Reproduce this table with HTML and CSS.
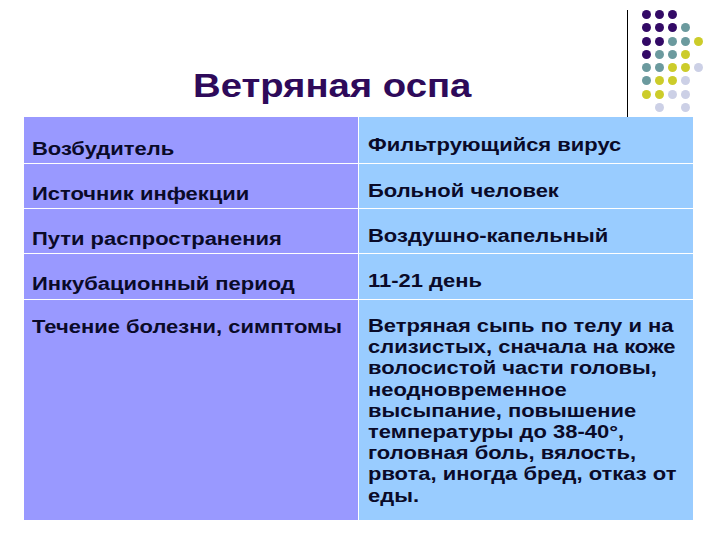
FILE: index.html
```html
<!DOCTYPE html>
<html lang="ru">
<head>
<meta charset="utf-8">
<title>Ветряная оспа</title>
<link rel="stylesheet" href="styles.css">
</head>
<body>
<div class="slide">
  <header class="header">
    <h1 class="title"><span class="wide">Ветряная оспа</span></h1>
    <div class="vline"></div>
    <div class="dots">
      <span class="d p"></span><span class="d p"></span><span class="d p"></span><span class="d"></span><span class="d"></span>
      <span class="d p"></span><span class="d p"></span><span class="d p"></span><span class="d t"></span><span class="d"></span>
      <span class="d p"></span><span class="d p"></span><span class="d t"></span><span class="d t"></span><span class="d y"></span>
      <span class="d p"></span><span class="d t"></span><span class="d t"></span><span class="d y"></span><span class="d"></span>
      <span class="d t"></span><span class="d t"></span><span class="d y"></span><span class="d y"></span><span class="d l"></span>
      <span class="d t"></span><span class="d y"></span><span class="d y"></span><span class="d l"></span><span class="d"></span>
      <span class="d y"></span><span class="d y"></span><span class="d l"></span><span class="d l"></span><span class="d"></span>
      <span class="d"></span><span class="d l"></span><span class="d"></span><span class="d l"></span><span class="d"></span>
    </div>
  </header>
  <div class="table">
    <div class="cell key r1"><span class="wide">Возбудитель</span></div>
    <div class="cell val r1"><span class="wide">Фильтрующийся вирус</span></div>
    <div class="cell key"><span class="wide">Источник инфекции</span></div>
    <div class="cell val"><span class="wide">Больной человек</span></div>
    <div class="cell key"><span class="wide">Пути распространения</span></div>
    <div class="cell val"><span class="wide">Воздушно-капельный</span></div>
    <div class="cell key"><span class="wide">Инкубационный период</span></div>
    <div class="cell val"><span class="wide">11-21 день</span></div>
    <div class="cell key last"><span class="wide">Течение болезни, симптомы</span></div>
    <div class="cell val last"><span class="wide">Ветряная сыпь по телу и на<br>слизистых, сначала на коже<br>волосистой части головы,<br>неодновременное<br>высыпание, повышение<br>температуры до 38-40°,<br>головная боль, вялость,<br>рвота, иногда бред, отказ от<br>еды.</span></div>
  </div>
</div>
</body>
</html>
```

FILE: styles.css
```css
html, body {
  margin: 0;
  padding: 0;
  background: #ffffff;
}

.slide {
  width: 720px;
  height: 540px;
  font-family: "Liberation Sans", Arial, sans-serif;
}

.wide {
  display: inline-block;
  transform-origin: left top;
}

.header {
  display: flex;
  height: 117px;
}

.title {
  flex: 0 0 627px;
  box-sizing: border-box;
  margin: 0;
  padding: 69px 0 0 193px;
  font-size: 33px;
  line-height: 1;
  font-weight: bold;
  color: #2e0a5a;
}

.title .wide {
  transform: scaleX(1.16);
}

.vline {
  width: 1px;
  margin-top: 10px;
  background: #000000;
}

.dots {
  margin: 10px 0 0 14px;
  display: grid;
  grid-template-columns: repeat(5, 9px);
  grid-auto-rows: 9px;
  column-gap: 4px;
  row-gap: 4.3px;
  align-self: flex-start;
}

.d {
  width: 9px;
  height: 9px;
  border-radius: 50%;
}

.d.p { background: #330a66; }
.d.t { background: #6b9a9e; }
.d.y { background: #cccc2a; }
.d.l { background: #ccd0e6; }

.table {
  margin-left: 24px;
  width: 669px;
  display: grid;
  grid-template-columns: 334px 334px;
  grid-template-rows: 46px 44px 44px 45px 220px;
  gap: 1px;
  background: #ffffff;
}

.cell {
  box-sizing: border-box;
  font-size: 18px;
  line-height: 21.2px;
  font-weight: bold;
  color: #0a0a28;
  white-space: nowrap;
}

.cell .wide {
  transform: scaleX(1.22);
}

.key {
  background: #9999ff;
  padding: 20px 0 0 8px;
}

.val {
  background: #99ccff;
  padding: 17px 0 0 9px;
}

.key.r1 {
  padding-top: 22px;
}

.val.r1 {
  padding-top: 18px;
}

.key.last {
  padding-top: 17px;
}

.val.last {
  padding-top: 16px;
}
```
